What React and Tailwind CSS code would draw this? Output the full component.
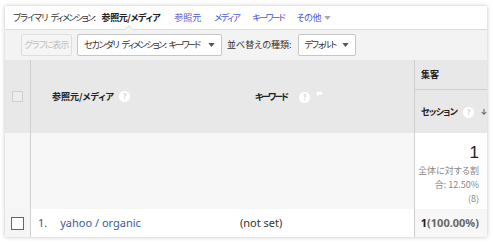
import React from 'react';

const jp = "font-['Noto_Sans_CJK_JP','Noto_Sans',sans-serif] [font-feature-settings:'palt']";

const Help = () => (
  <span className="inline-flex h-[11px] w-[11px] shrink-0 items-center justify-center rounded-full bg-white text-[7px] font-bold leading-none tracking-normal text-[#ccc]">
    ?
  </span>
);

const Caret = ({ className = '' }) => (
  <svg width="7" height="4" viewBox="0 0 8 5" className={className}>
    <path d="M0 0h8L4 5z" fill="currentColor" />
  </svg>
);

const App = () => {
  return (
    <div className={`h-[244px] w-[493px] bg-white pt-[6px] pl-[5px] ${jp}`}>
      <div className="w-[482px] h-[231px] bg-white shadow-[0_0_4px_rgba(0,0,0,0.25)] overflow-hidden">
        {/* primary dimension nav */}
        <div className="relative flex h-[24px] items-center whitespace-nowrap border-b border-[#dcdcdc] pl-[8px] text-[9px] text-[#333]">
          <span className="tracking-[-1px]">プライマリ</span>
          <span className="ml-[3px] tracking-[-1.5px]">ディメンション:</span>
          <span className="ml-[7px] font-bold tracking-[-0.4px] text-[#222]">参照元/メディア</span>
          <span className="ml-[14px] text-[#4a56d4]">参照元</span>
          <span className="ml-[13px] tracking-[-1.5px] text-[#4a56d4]">メディア</span>
          <span className="ml-[13px] tracking-[-2px] text-[#4a56d4]">キーワード</span>
          <span className="ml-[13px] tracking-[-0.5px] text-[#4a56d4]">その他</span>
          <Caret className="ml-[3px] text-[#aaa]" />
          <span className="absolute bottom-[-1px] left-[119px] h-0 w-0 border-x-[5px] border-b-[5px] border-x-transparent border-b-[#dcdcdc]" />
          <span className="absolute bottom-[-1px] left-[120px] h-0 w-0 border-x-[4px] border-b-[4px] border-x-transparent border-b-[#f3f3f3]" />
        </div>

        {/* toolbar */}
        <div className="flex h-[30px] items-center whitespace-nowrap bg-[#f3f3f3] pl-[16px] text-[9px]">
          <button className="h-[22px] w-[51px] rounded-[2px] border border-[#dedede] bg-[#f5f5f5] tracking-[-1px] text-[#c0c0c0]">
            グラフに表示
          </button>
          <button className="ml-[5px] flex h-[22px] w-[145px] items-center rounded-[2px] border border-[#c6c6c6] bg-white pl-[6px] pr-[6px] text-[#333]">
            <span className="tracking-[-1.2px]">セカンダリ</span>
            <span className="ml-[3px] tracking-[-1.5px]">ディメンション:</span>
            <span className="ml-[3px] tracking-[-2.2px]">キーワード</span>
            <Caret className="ml-auto text-[#555]" />
          </button>
          <span className="ml-[5px] text-[#333]">並べ替えの種類:</span>
          <button className="ml-[6px] flex h-[22px] w-[58px] items-center justify-between rounded-[2px] border border-[#c6c6c6] bg-white pl-[6px] pr-[6px] text-[#333]">
            <span className="tracking-[-1.4px]">デフォルト</span>
            <Caret className="text-[#555]" />
          </button>
        </div>

        {/* table */}
        <div className="grid grid-cols-[26px_209px_174px_73px]">
          {/* header */}
          <div className="flex h-[73px] items-center justify-center border-r border-[#cfcfcf] bg-[#e8e8e8]">
            <span className="h-[11px] w-[11px] border border-[#cfcfcf] bg-[#ececec]" />
          </div>
          <div className="flex items-center gap-[5px] bg-[#e8e8e8] pl-[21px] text-[9px] font-bold text-[#222]">
            参照元/メディア <Help />
          </div>
          <div className="flex items-center bg-[#e8e8e8] pl-[15px] text-[9px] font-bold text-[#222]">
            <span className="tracking-[-2px]">キーワード</span>
            <span className="ml-[12px]"><Help /></span>
            <svg width="9" height="8" viewBox="0 0 9 8" className="ml-[5px] mb-[6px]">
              <path d="M1 1h7v4.5H4L2 7.5V5.5H1z" fill="#fff" stroke="#ddd" strokeWidth="0.8" />
            </svg>
          </div>
          <div className="flex flex-col border-l border-[#cfcfcf] bg-[#e8e8e8]">
            <div className="flex h-[30px] items-center border-b border-[#cfcfcf] pl-[6px] text-[9px] font-bold text-[#222]">
              集客
            </div>
            <div className="flex flex-1 items-center whitespace-nowrap pl-[6px] text-[9px] font-bold text-[#222]">
              <span className="tracking-[-0.8px]">セッション</span>
              <span className="ml-[6px]"><Help /></span>
              <svg width="9" height="10" viewBox="0 0 9 10" className="ml-[7px]">
                <path d="M4.5 0.5v8M1 5l3.5 3.5L8 5" fill="none" stroke="#666" strokeWidth="1.6" />
              </svg>
            </div>
          </div>

          {/* summary */}
          <div className="h-[76px] border-r border-[#cfcfcf] bg-[#f7f7f7]" />
          <div className="bg-[#f7f7f7]" />
          <div className="bg-[#f7f7f7]" />
          <div className="flex flex-col items-end border-l border-[#cfcfcf] bg-white pr-[8px] pt-[10px] text-right">
            <span className="font-['Liberation_Sans',sans-serif] text-[17px] leading-[20px] text-[#222]">1</span>
            <span className="mt-[1px] text-[9px] leading-[14px] text-[#888]">全体に対する割</span>
            <span className="text-[9px] leading-[14px] text-[#888]">合: 12.50%</span>
            <span className="text-[9px] leading-[14px] text-[#888]">(8)</span>
          </div>

          {/* data row */}
          <div className="flex h-[28px] items-center justify-center border-r border-[#cfcfcf] bg-[#f5f5f5]">
            <span className="h-[13px] w-[13px] border border-[#666] bg-white" />
          </div>
          <div className="flex items-center bg-white pl-[7px] font-['Noto_Sans',sans-serif] text-[11px]">
            <span className="text-[#555]">1.</span>
            <span className="ml-[13px] text-[#3a5a9c]">yahoo / organic</span>
          </div>
          <div className="flex items-center bg-white font-['Noto_Sans',sans-serif] text-[11px] text-[#333]">(not set)</div>
          <div className="flex items-center justify-end border-l border-[#cfcfcf] bg-[#f7f7f7] pr-[8px] font-['Noto_Sans',sans-serif] text-[11px] font-bold">
            <span className="text-[#222]">1</span>
            <span className="text-[#666]">(100.00%)</span>
          </div>
        </div>
      </div>
    </div>
  );
};

export default App;
